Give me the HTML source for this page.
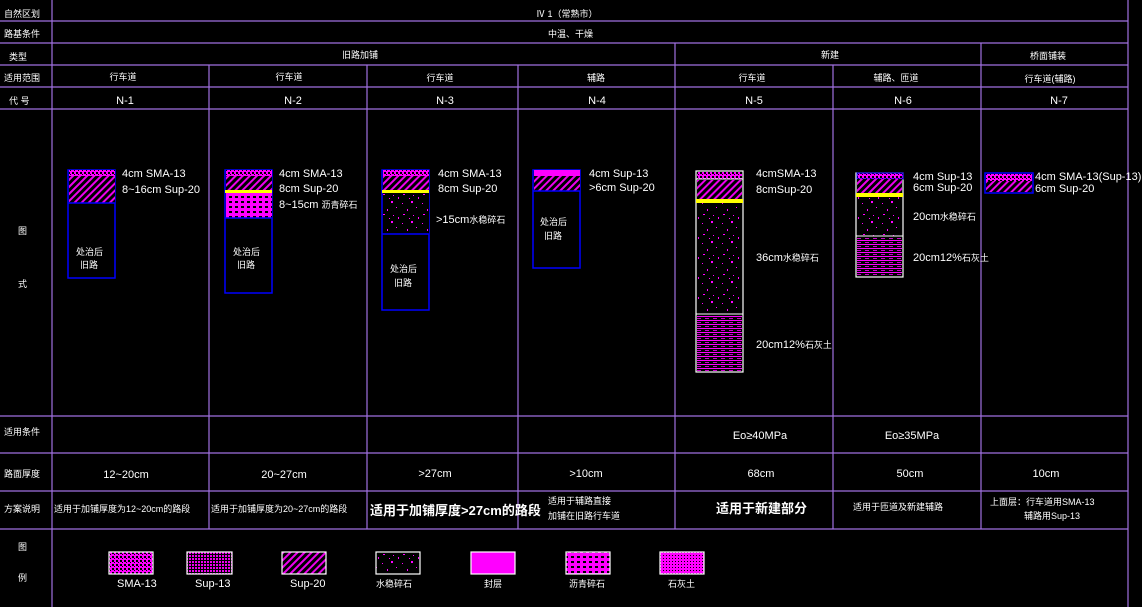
<!DOCTYPE html>
<html><head><meta charset="utf-8"><style>
html,body{margin:0;padding:0;background:#000;}
svg{display:block;}
text{fill:#fff;font-family:"Liberation Sans","Noto Sans CJK SC",sans-serif;font-size:11px;}
.s{font-size:9px;}
.b{font-size:13px;font-weight:bold;}
</style></head><body>
<svg width="1142" height="607" viewBox="0 0 1142 607" xmlns="http://www.w3.org/2000/svg">
<defs>
<pattern id="sma" width="4" height="4" patternUnits="userSpaceOnUse"><rect width="4" height="4" fill="#f0f"/><rect x="0" y="0" width="2" height="2" fill="#000"/><rect x="2" y="2" width="1" height="1" fill="#000"/></pattern>
<pattern id="hat" width="5" height="5" patternUnits="userSpaceOnUse" patternTransform="rotate(45)"><rect width="5" height="5" fill="#000"/><rect width="2" height="5" fill="#e0e"/></pattern>
<pattern id="dot" width="20" height="20" patternUnits="userSpaceOnUse"><rect width="20" height="20" fill="#000"/><rect x="2" y="3" width="1" height="1" fill="#f0f"/><rect x="11" y="1" width="2" height="2" fill="#f0f"/><rect x="7" y="9" width="1" height="2" fill="#f0f"/><rect x="16" y="7" width="1" height="1" fill="#f0f"/><rect x="3" y="14" width="2" height="1" fill="#f0f"/><rect x="13" y="15" width="1" height="1" fill="#f0f"/><rect x="18" y="17" width="1" height="2" fill="#f0f"/><rect x="9" y="18" width="1" height="1" fill="#f0f"/></pattern>
<pattern id="lin" width="8" height="4" patternUnits="userSpaceOnUse"><rect width="8" height="4" fill="#000"/><rect y="0" width="8" height="1" fill="#f0f"/><rect x="1" y="2" width="4" height="1" fill="#c0c"/></pattern>
<pattern id="grv" width="6" height="5" patternUnits="userSpaceOnUse"><rect width="6" height="5" fill="#f0f"/><rect x="1" y="1" width="3" height="2" fill="#000"/></pattern>
<pattern id="sup13" width="3" height="3" patternUnits="userSpaceOnUse"><rect width="3" height="3" fill="#000"/><rect width="2" height="2" fill="#e0e"/></pattern>
<pattern id="lime" width="3" height="3" patternUnits="userSpaceOnUse"><rect width="3" height="3" fill="#f0f"/><rect width="1" height="1" fill="#000"/></pattern>
</defs>
<g stroke="#a070e0" stroke-width="1.2" fill="none">
<line x1="0" y1="21" x2="1128" y2="21"/><line x1="0" y1="43" x2="1128" y2="43"/><line x1="0" y1="65" x2="1128" y2="65"/><line x1="0" y1="87" x2="1128" y2="87"/><line x1="0" y1="109" x2="1128" y2="109"/><line x1="0" y1="416" x2="1128" y2="416"/><line x1="0" y1="453" x2="1128" y2="453"/><line x1="0" y1="491" x2="1128" y2="491"/><line x1="0" y1="529" x2="1128" y2="529"/>
<line x1="52" y1="0" x2="52" y2="607"/><line x1="1128" y1="0" x2="1128" y2="607"/>
<line x1="675" y1="43" x2="675" y2="529"/><line x1="981" y1="43" x2="981" y2="529"/>
<line x1="209" y1="65" x2="209" y2="529"/><line x1="367" y1="65" x2="367" y2="529"/><line x1="518" y1="65" x2="518" y2="529"/><line x1="833" y1="65" x2="833" y2="529"/>
</g>
<text x="4" y="17" class="s">自然区划</text><text x="4" y="37" class="s">路基条件</text><text x="9" y="60" class="s">类型</text><text x="4" y="81" class="s">适用范围</text><text x="9" y="104" class="s">代  号</text>
<text x="18" y="234" class="s">图</text><text x="18" y="287" class="s">式</text>
<text x="4" y="435" class="s">适用条件</text><text x="4" y="477" class="s">路面厚度</text><text x="4" y="512" class="s">方案说明</text>
<text x="18" y="550" class="s">图</text><text x="18" y="581" class="s">例</text>
<text x="536" y="17" class="s">Ⅳ 1（常熟市）</text><text x="548" y="37" class="s">中温、干燥</text>
<g text-anchor="middle" class="s">
<text x="360" y="58" class="s">旧路加铺</text><text x="830" y="58" class="s">新建</text><text x="1048" y="59" class="s">桥面铺装</text>
<text x="123" y="80" class="s">行车道</text><text x="289" y="80" class="s">行车道</text><text x="440" y="81" class="s">行车道</text><text x="596" y="81" class="s">辅路</text><text x="752" y="81" class="s">行车道</text><text x="896" y="81" class="s">辅路、匝道</text><text x="1050" y="82" class="s">行车道(辅路)</text>
</g>
<g text-anchor="middle">
<text x="125" y="104">N-1</text><text x="293" y="104">N-2</text><text x="445" y="104">N-3</text><text x="597" y="104">N-4</text><text x="754" y="104">N-5</text><text x="903" y="104">N-6</text><text x="1059" y="104">N-7</text>
<text x="760" y="439">Eo≥40MPa</text><text x="912" y="439">Eo≥35MPa</text>
<text x="126" y="478">12~20cm</text><text x="284" y="478">20~27cm</text><text x="435" y="477">&gt;27cm</text><text x="586" y="477">&gt;10cm</text><text x="761" y="477">68cm</text><text x="910" y="477">50cm</text><text x="1046" y="477">10cm</text>
</g>
<!-- N-1 -->
<rect x="68" y="170" width="47" height="108" fill="none" stroke="#00f" stroke-width="1.5"/>
<rect x="69" y="170" width="46" height="6" fill="url(#sma)"/><rect x="69" y="176" width="46" height="27" fill="url(#hat)"/><line x1="68" y1="203" x2="115" y2="203" stroke="#00f" stroke-width="1.5"/>
<text x="122" y="177">4cm SMA-13</text><text x="122" y="193">8~16cm Sup-20</text>
<text x="76" y="255" class="s">处治后</text><text x="80" y="268" class="s">旧路</text>
<!-- N-2 -->
<rect x="225" y="170" width="47" height="123" fill="none" stroke="#00f" stroke-width="1.5"/>
<rect x="226" y="170" width="46" height="6" fill="url(#sma)"/><rect x="226" y="176" width="46" height="14" fill="url(#hat)"/><rect x="225" y="190" width="47" height="3" fill="#ff0"/><rect x="226" y="193" width="46" height="25" fill="url(#grv)"/><line x1="225" y1="218" x2="272" y2="218" stroke="#00f" stroke-width="1.5"/>
<text x="279" y="177">4cm SMA-13</text><text x="279" y="192">8cm Sup-20</text><text x="279" y="208">8~15cm <tspan class="s">沥青碎石</tspan></text>
<text x="233" y="255" class="s">处治后</text><text x="237" y="268" class="s">旧路</text>
<!-- N-3 -->
<rect x="382" y="170" width="47" height="140" fill="none" stroke="#00f" stroke-width="1.5"/>
<rect x="383" y="170" width="46" height="6" fill="url(#sma)"/><rect x="383" y="176" width="46" height="14" fill="url(#hat)"/><rect x="382" y="190" width="47" height="3" fill="#ff0"/><rect x="383" y="193" width="46" height="41" fill="url(#dot)"/><line x1="382" y1="234" x2="429" y2="234" stroke="#00f" stroke-width="1.5"/>
<text x="438" y="177">4cm SMA-13</text><text x="438" y="192">8cm Sup-20</text><text x="436" y="223">&gt;15cm<tspan class="s">水稳碎石</tspan></text>
<text x="390" y="272" class="s">处治后</text><text x="394" y="286" class="s">旧路</text>
<!-- N-4 -->
<rect x="533" y="170" width="47" height="98" fill="none" stroke="#00f" stroke-width="1.5"/>
<rect x="534" y="170" width="46" height="6" fill="#f0f"/><rect x="534" y="176" width="46" height="15" fill="url(#hat)"/><line x1="533" y1="191" x2="580" y2="191" stroke="#00f" stroke-width="1.5"/>
<text x="589" y="177">4cm Sup-13</text><text x="589" y="191">&gt;6cm Sup-20</text>
<text x="540" y="225" class="s">处治后</text><text x="544" y="239" class="s">旧路</text>
<!-- N-5 -->
<rect x="696" y="171" width="47" height="201" fill="none" stroke="#fff" stroke-width="1.2"/>
<rect x="697" y="172" width="45" height="7" fill="url(#sma)"/><line x1="696" y1="179" x2="743" y2="179" stroke="#fff"/><rect x="697" y="180" width="45" height="19" fill="url(#hat)"/><rect x="696" y="199" width="47" height="4" fill="#ff0"/><rect x="697" y="203" width="45" height="111" fill="url(#dot)"/><line x1="696" y1="314" x2="743" y2="314" stroke="#fff"/><rect x="697" y="315" width="45" height="56" fill="url(#lin)"/>
<text x="756" y="177">4cmSMA-13</text><text x="756" y="193">8cmSup-20</text><text x="756" y="261">36cm<tspan class="s">水稳碎石</tspan></text><text x="756" y="348">20cm12%<tspan class="s">石灰土</tspan></text>
<!-- N-6 -->
<rect x="856" y="173" width="47" height="104" fill="none" stroke="#fff" stroke-width="1.2"/>
<rect x="857" y="173" width="46" height="6" fill="url(#sma)" stroke="#00f"/><rect x="857" y="179" width="45" height="14" fill="url(#hat)"/><rect x="856" y="193" width="47" height="4" fill="#ff0"/><rect x="857" y="197" width="45" height="39" fill="url(#dot)"/><line x1="856" y1="236" x2="903" y2="236" stroke="#fff"/><rect x="857" y="237" width="45" height="39" fill="url(#lin)"/>
<text x="913" y="180">4cm Sup-13</text><text x="913" y="191">6cm Sup-20</text><text x="913" y="220">20cm<tspan class="s">水稳碎石</tspan></text><text x="913" y="261">20cm12%<tspan class="s">石灰土</tspan></text>
<!-- N-7 -->
<rect x="985" y="173" width="48" height="20" fill="none" stroke="#00f" stroke-width="1.5"/>
<rect x="986" y="174" width="46" height="7" fill="url(#sma)"/><rect x="986" y="181" width="46" height="11" fill="url(#hat)"/>
<text x="1035" y="180">4cm SMA-13(Sup-13)</text><text x="1035" y="192">6cm Sup-20</text>
<!-- 方案说明 -->
<text x="54" y="512" class="s">适用于加铺厚度为12~20cm的路段</text>
<text x="211" y="512" class="s">适用于加铺厚度为20~27cm的路段</text>
<text x="370" y="515" class="b">适用于加铺厚度&gt;27cm的路段</text>
<text x="548" y="504" class="s">适用于辅路直接</text><text x="548" y="519" class="s">加铺在旧路行车道</text>
<text x="716" y="513" class="b">适用于新建部分</text>
<text x="853" y="510" class="s">适用于匝道及新建辅路</text>
<text x="990" y="505" class="s">上面层：行车道用SMA-13</text><text x="1024" y="519" class="s">辅路用Sup-13</text>
<!-- legend -->
<g stroke="#fff" stroke-width="1.2">
<rect x="109" y="552" width="44" height="22" fill="url(#sma)"/>
<rect x="187" y="552" width="45" height="22" fill="url(#sup13)"/>
<rect x="282" y="552" width="44" height="22" fill="url(#hat)"/>
<rect x="376" y="552" width="44" height="22" fill="url(#dot)"/>
<rect x="471" y="552" width="44" height="22" fill="#f0f"/>
<rect x="566" y="552" width="44" height="22" fill="url(#grv)"/>
<rect x="660" y="552" width="44" height="22" fill="url(#lime)"/>
</g>
<text x="117" y="587">SMA-13</text><text x="195" y="587">Sup-13</text><text x="290" y="587">Sup-20</text>
<text x="376" y="587" class="s">水稳碎石</text><text x="484" y="587" class="s">封层</text><text x="569" y="587" class="s">沥青碎石</text><text x="668" y="587" class="s">石灰土</text>
</svg>
</body></html>
